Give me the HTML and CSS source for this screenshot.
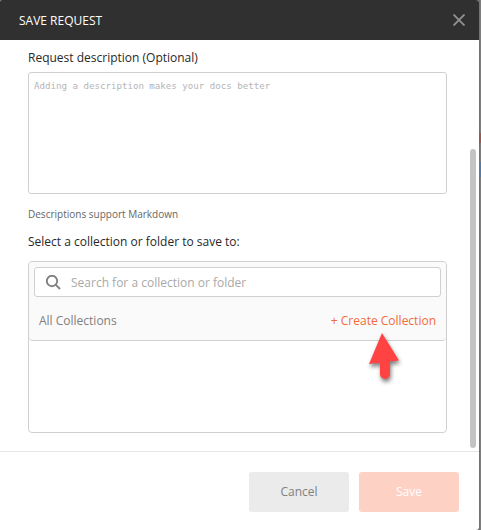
FILE: index.html
```html
<!DOCTYPE html>
<html lang="en">
<head>
<meta charset="utf-8">
<title>Save Request</title>
<link rel="stylesheet" href="styles.css">
</head>
<body>
<div class="backdrop">
  <div class="modal">
    <header class="modal-header">
      <span class="modal-title">SAVE REQUEST</span>
      <svg class="close" width="12" height="12" viewBox="0 0 12 12"><path d="M.5.5l11 11M11.5.5L.5 11.5"/></svg>
    </header>
    <main class="modal-body">
      <div class="label description-label"><span>Request description (Optional)</span></div>
      <div class="editor"><span>Adding a description makes your docs better</span></div>
      <div class="hint"><span>Descriptions support Markdown</span></div>
      <div class="label select-label"><span>Select a collection or folder to save to:</span></div>
      <section class="picker">
        <div class="picker-head">
          <div class="search">
            <svg class="search-icon" width="15" height="15" viewBox="0 0 15 15"><circle cx="6" cy="6" r="5.2"/><path d="M9.8 9.8l4.2 4.2"/></svg>
            <span class="search-text">Search for a collection or folder</span>
          </div>
          <div class="picker-row">
            <span class="all">All Collections</span>
            <span class="create">+ Create Collection</span>
          </div>
        </div>
      </section>
    </main>
    <footer class="modal-footer">
      <div class="button cancel"><span>Cancel</span></div>
      <div class="button save"><span>Save</span></div>
    </footer>
    <div class="scrollbar"></div>
    <svg class="pointer" width="44" height="58" viewBox="0 0 44 58"><path d="M17 3L4 34l11-1.2V44a5 5 0 0 0 10 0V31.6l9-1.2z"/></svg>
  </div>
  <i class="mark red"></i>
  <i class="mark blue"></i>
</div>
</body>
</html>
```
FILE: styles.css
```css
* { box-sizing: border-box; }
body {
  margin: 0;
  font: 12px/18px "Open Sans", "Noto Sans", sans-serif;
  color: #282828;
}
.backdrop {
  position: relative;
  width: 481px;
  height: 530px;
  overflow: hidden;
  background: linear-gradient(90deg, #686868 479px, #7e7e7e 480px);
}
.modal {
  position: relative;
  display: flex;
  flex-direction: column;
  width: 479px;
  height: 530px;
  background: #fff;
  border-radius: 2px 3px 3px 0;
  overflow: hidden;
}
.modal-header {
  display: flex;
  align-items: center;
  justify-content: space-between;
  height: 40px;
  padding: 0 14px 0 19px;
  background: #303030;
  color: #fff;
}
.modal-title { padding-top: 1px; }
.close { stroke: #929292; stroke-width: 1.8; fill: none; }
.modal-body { height: 411px; padding: 9px 32px 0 28px; }
.label { height: 18px; white-space: nowrap; }
.editor {
  height: 122px;
  margin-top: 5px;
  padding: 4px 5px;
  border: 1px solid #d0d0d0;
  border-radius: 3px;
  font: 9.14px/18px "DejaVu Sans Mono", monospace;
  color: #b5b5b5;
  white-space: nowrap;
}
.hint { height: 18px; margin-top: 11px; font-size: 10px; color: #666; }
.select-label { margin-top: 10px; }
.picker {
  height: 172px;
  margin-top: 10px;
  border: 1px solid #d0d0d0;
  border-radius: 4px;
}
.picker-head {
  height: 79px;
  padding: 5px;
  background: #fafafa;
  border-bottom: 1px solid #d0d0d0;
  border-radius: 4px;
}
.search {
  display: flex;
  align-items: center;
  height: 30px;
  padding-left: 11px;
  border: 1px solid #d0d0d0;
  border-radius: 3px;
  background: #fff;
  color: #a9a9a9;
}
.search-icon { margin-right: 10px; stroke: #808080; stroke-width: 1.9; fill: none; }
.search-text { padding-top: 2px; }
.picker-row {
  display: flex;
  justify-content: space-between;
  padding: 15px 5px 0;
  color: #808080;
}
.create { color: #f26b3a; }
.modal-footer {
  display: flex;
  justify-content: flex-end;
  gap: 10px;
  height: 79px;
  padding: 20px 20px 0 0;
  border-top: 1px solid #e6e6e6;
}
.button {
  display: flex;
  align-items: center;
  justify-content: center;
  width: 100px;
  height: 40px;
  border-radius: 3px;
}
.cancel { background: #ebebeb; color: #808080; }
.save { background: #fdd1c4; color: #fff; }
.scrollbar {
  position: absolute;
  left: 470px;
  top: 149px;
  width: 6px;
  height: 299px;
  border-radius: 3px;
  background: #c4c4c4;
}
.pointer {
  position: absolute;
  left: 365px;
  top: 330px;
  fill: #ff4343;
  filter: drop-shadow(1px 3px 2px rgba(0, 0, 0, .5));
}
.mark { position: absolute; left: 479px; width: 2px; }
.red { top: 133px; height: 10px; background: #955a52; }
.blue { top: 162px; height: 15px; background: #557ba5; }
```
